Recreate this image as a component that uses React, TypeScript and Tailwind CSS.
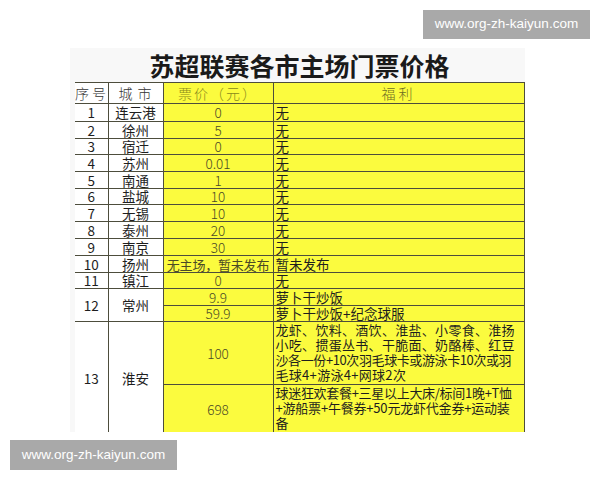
import React from "react";

type Row = { no: string; city: string; price: string; gift: string; h: string };

const rows: Row[] = [
  { no: "1", city: "连云港", price: "0", gift: "无", h: "h-[18px]" },
  { no: "2", city: "徐州", price: "5", gift: "无", h: "h-[17px]" },
  { no: "3", city: "宿迁", price: "0", gift: "无", h: "h-[16px]" },
  { no: "4", city: "苏州", price: "0.01", gift: "无", h: "h-[17px]" },
  { no: "5", city: "南通", price: "1", gift: "无", h: "h-[17px]" },
  { no: "6", city: "盐城", price: "10", gift: "无", h: "h-[16px]" },
  { no: "7", city: "无锡", price: "10", gift: "无", h: "h-[17px]" },
  { no: "8", city: "泰州", price: "20", gift: "无", h: "h-[17px]" },
  { no: "9", city: "南京", price: "30", gift: "无", h: "h-[17px]" },
  { no: "10", city: "扬州", price: "无主场，暂未发布", gift: "暂未发布", h: "h-[17px]" },
  { no: "11", city: "镇江", price: "0", gift: "无", h: "h-[16px]" },
];

const cell = "border border-[#4d4d3c] p-0 leading-[15px] whitespace-nowrap";
const yellow = "bg-[#fbfb3e]";
const priceTxt = " text-center text-[#4a4a26]";
const giftTxt = " text-left pl-[2px]";

function Badge({ className }: { className: string }) {
  return (
    <div
      className={
        "absolute flex items-center justify-center bg-[#a9a9a9] text-white text-[13.5px] font-['Liberation_Sans',Arial,sans-serif] " +
        className
      }
    >
      www.org-zh-kaiyun.com
    </div>
  );
}

export default function App() {
  return (
    <div className="relative w-[600px] h-[480px] bg-white overflow-hidden font-['Noto_Sans_CJK_SC',sans-serif] text-[#1e1e1e]">
      <div className="pt-[48px] pl-[70px]">
        <div className="w-[455px] h-[384px] bg-[#f8f8f8] overflow-hidden">
          {/* Title */}
          <div className="h-[34px] flex items-center justify-center pl-[4px] text-[25px] font-bold text-[#1a1a1a] leading-none">
            苏超联赛各市主场门票价格
          </div>

          {/* Table */}
          <div className="pl-[5px] h-[350px] overflow-hidden">
            <table className="table-fixed border-collapse w-[449px] text-[13.5px] font-normal">
              <colgroup>
                <col className="w-[33px]" />
                <col className="w-[55px]" />
                <col className="w-[110px]" />
                <col className="w-[251px]" />
              </colgroup>
              <thead>
                <tr className="h-[21px]">
                  <th className={cell + " border-l-0 bg-white font-light text-[#333] text-[14px] tracking-[3px] text-left"}>序号</th>
                  <th className={cell + " bg-white font-light text-[#333] text-[14px] tracking-[5px] text-center pl-[4px]"}>城市</th>
                  <th className={cell + " " + yellow + " font-light text-[#8a8a1c] text-[14px] tracking-[2px] text-center"}>票价（元）</th>
                  <th className={cell + " " + yellow + " font-light text-[#6e6e24] text-[14px] tracking-[3px] text-center"}>福利</th>
                </tr>
              </thead>
              <tbody>
                {rows.map((r) => (
                  <tr key={r.no} className={r.h}>
                    <td className={cell + " border-l-0 bg-white text-center"}>{r.no}</td>
                    <td className={cell + " bg-white text-center"}>{r.city}</td>
                    <td
                      className={
                        cell + " " + yellow + priceTxt + (r.price.length > 4 ? " text-[13px] tracking-[-0.2px]" : " font-light")
                      }
                    >
                      {r.price}
                    </td>
                    <td className={cell + " " + yellow + giftTxt}>{r.gift}</td>
                  </tr>
                ))}
                <tr className="h-[17px]">
                  <td rowSpan={2} className={cell + " border-l-0 bg-white text-center"}>12</td>
                  <td rowSpan={2} className={cell + " bg-white text-center"}>常州</td>
                  <td className={cell + " " + yellow + priceTxt + " font-light"}>9.9</td>
                  <td className={cell + " " + yellow + giftTxt}>萝卜干炒饭</td>
                </tr>
                <tr className="h-[15px]">
                  <td className={cell + " " + yellow + priceTxt + " font-light"}>59.9</td>
                  <td className={cell + " " + yellow + giftTxt}>萝卜干炒饭+纪念球服</td>
                </tr>
                <tr className="h-[63px]">
                  <td rowSpan={2} className={cell + " border-l-0 bg-white text-center"}>13</td>
                  <td rowSpan={2} className={cell + " bg-white text-center"}>淮安</td>
                  <td className={cell + " " + yellow + priceTxt + " font-light"}>100</td>
                  <td className={cell + " " + yellow + giftTxt + " text-[13px] tracking-[0.3px] leading-[15.7px] align-top"}>
                    <div>龙虾、饮料、酒饮、淮盐、小零食、淮扬</div>
                    <div>小吃、掼蛋丛书、干脆面、奶酪棒、红豆</div>
                    <div className="tracking-[-0.4px]">沙各一份+10次羽毛球卡或游泳卡10次或羽</div>
                    <div>毛球4+游泳4+网球2次</div>
                  </td>
                </tr>
                <tr className="h-[50px]">
                  <td className={cell + " " + yellow + priceTxt + " font-light align-top pt-[17px]"}>698</td>
                  <td className={cell + " " + yellow + giftTxt + " text-[13px] leading-[15.7px] align-top"}>
                    <div className="tracking-[-0.3px]">球迷狂欢套餐+三星以上大床/标间1晚+T恤</div>
                    <div className="tracking-[-0.2px]">+游船票+午餐券+50元龙虾代金券+运动装</div>
                    <div>备</div>
                  </td>
                </tr>
              </tbody>
            </table>
          </div>
        </div>
      </div>

      <Badge className="left-[423px] top-[10px] w-[167px] h-[29px]" />
      <Badge className="left-[10px] top-[440px] w-[167px] h-[30px]" />
    </div>
  );
}
